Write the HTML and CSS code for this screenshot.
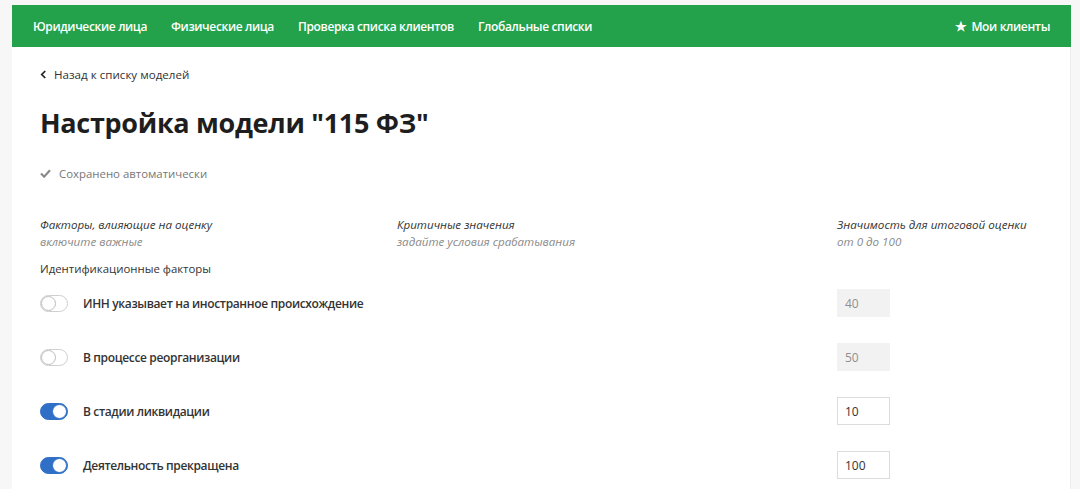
FILE: index.html
```html
<!DOCTYPE html>
<html lang="ru">
<head>
<meta charset="utf-8">
<link rel="stylesheet" href="styles.css">
</head>
<body>
<div class="page">
  <nav class="topnav">
    <div class="nav-left">
      <a class="nav-item">Юридические лица</a>
      <a class="nav-item">Физические лица</a>
      <a class="nav-item">Проверка списка клиентов</a>
      <a class="nav-item">Глобальные списки</a>
    </div>
    <a class="nav-item nav-right"><span class="star">★</span>Мои клиенты</a>
  </nav>
  <main class="card">
    <a class="back"><svg class="chev" viewBox="0 0 8 10" width="7" height="9"><path d="M6 1 L2 5 L6 9" fill="none" stroke="#222" stroke-width="2"/></svg>Назад к списку моделей</a>
    <h1 class="title">Настройка модели "115 ФЗ"</h1>
    <div class="saved"><svg viewBox="0 0 12 10" width="11" height="9"><path d="M1 5 L4.5 8.5 L11 1.5" fill="none" stroke="#888" stroke-width="2.4"/></svg>Сохранено автоматически</div>
    <div class="heads">
      <div class="head"><div class="h-main">Факторы, влияющие на оценку</div><div class="h-sub">включите важные</div></div>
      <div class="head"><div class="h-main">Критичные значения</div><div class="h-sub">задайте условия срабатывания</div></div>
      <div class="head"><div class="h-main">Значимость для итоговой оценки</div><div class="h-sub">от 0 до 100</div></div>
    </div>
    <div class="group">Идентификационные факторы</div>
    <div class="row">
      <div class="factor"><span class="toggle"></span><span class="label">ИНН указывает на иностранное происхождение</span></div>
      <div></div>
      <div><input class="num" value="40" disabled></div>
    </div>
    <div class="row">
      <div class="factor"><span class="toggle"></span><span class="label">В процессе реорганизации</span></div>
      <div></div>
      <div><input class="num" value="50" disabled></div>
    </div>
    <div class="row">
      <div class="factor"><span class="toggle on"></span><span class="label">В стадии ликвидации</span></div>
      <div></div>
      <div><input class="num" value="10"></div>
    </div>
    <div class="row">
      <div class="factor"><span class="toggle on"></span><span class="label">Деятельность прекращена</span></div>
      <div></div>
      <div><input class="num" value="100"></div>
    </div>
  </main>
</div>
</body>
</html>
```
FILE: styles.css
```css
html, body {
  margin: 0;
  padding: 0;
  background: #f7f7f7;
  font-family: "Open Sans", "Noto Sans", sans-serif;
  color: #222;
  overflow: hidden;
}
.page {
  padding: 5px 9px 0 12px;
}
.topnav {
  background: #23a24b;
  height: 42px;
  display: flex;
  align-items: center;
  justify-content: space-between;
  padding: 0 21px;
}
.nav-left {
  display: flex;
  gap: 24px;
}
.nav-item {
  color: #fff;
  font-size: 12px;
  font-weight: 600;
  letter-spacing: -0.35px;
}
.nav-right {
  display: flex;
  align-items: center;
  gap: 5px;
}
.star {
  font-size: 13px;
}
.card {
  background: #fff;
  border-right: 1px solid #ececec;
  padding: 19px 28px 0;
  height: 442px;
  box-sizing: border-box;
  overflow: hidden;
}
.back {
  display: flex;
  align-items: center;
  gap: 7px;
  font-size: 11.6px;
  color: #333;
  height: 17px;
}
.chev {
  display: block;
}
.title {
  margin: 21px 0 0;
  font-size: 27px;
  font-weight: 700;
  color: #1e1e1e;
  line-height: 38px;
  letter-spacing: -0.3px;
}
.saved {
  margin-top: 22px;
  display: flex;
  align-items: center;
  gap: 8px;
  font-size: 11.4px;
  color: #777;
  height: 18px;
}
.heads {
  margin-top: 34px;
  display: grid;
  grid-template-columns: 357px 440px 1fr;
}
.h-main {
  font-style: italic;
  font-size: 11.6px;
  color: #333;
  line-height: 17px;
}
.h-sub {
  font-style: italic;
  font-size: 11.6px;
  color: #8a8a8a;
  line-height: 17px;
}
.group {
  margin-top: 10px;
  font-size: 11.4px;
  color: #333;
  line-height: 17px;
}
.row {
  display: grid;
  grid-template-columns: 357px 440px 1fr;
  align-items: center;
  height: 54px;
}
.group + .row {
  margin-top: -1px;
}
.factor {
  display: flex;
  align-items: center;
  gap: 15px;
}
.toggle {
  position: relative;
  display: inline-block;
  width: 26px;
  height: 15px;
  border: 1px solid #cfcfcf;
  border-radius: 9px;
  background: #fff;
}
.toggle::after {
  content: "";
  position: absolute;
  left: 0;
  top: 0;
  width: 13px;
  height: 13px;
  border: 1px solid #bdbdbd;
  border-radius: 50%;
  background: #fff;
}
.toggle.on {
  background: #2f6fc6;
  border-color: #2f6fc6;
}
.toggle.on::after {
  left: 11px;
  border-color: #2f6fc6;
}
.label {
  font-size: 12px;
  font-weight: 600;
  color: #333;
  letter-spacing: -0.35px;
}
.num {
  box-sizing: border-box;
  width: 53px;
  height: 28px;
  border: 1px solid #dcdcdc;
  background: #fff;
  padding: 0 0 0 7px;
  font-family: "Open Sans", "Noto Sans", sans-serif;
  font-size: 12px;
  color: #333;
  outline: none;
}
.num:disabled {
  background: #f2f2f2;
  border-color: #f2f2f2;
  color: #8f8f8f;
}
```
